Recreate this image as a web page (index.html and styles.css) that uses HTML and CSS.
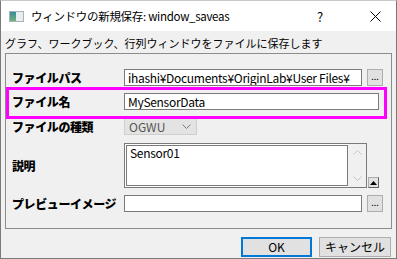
FILE: index.html
```
<!DOCTYPE html>
<html>
    <head>
        <meta charset="utf-8" />
        <title>ウィンドウの新規保存</title>
        <link rel="stylesheet" href="styles.css">
    </head>

    <body>
        <div class="m-dlg">
            <div class="titlebar">
                <span class="ico"><i></i></span>
                <span class="ttl">ウィンドウの新規保存: window_saveas</span>
                <span class="help">?</span>
                <span class="close">
                    <svg width="11" height="11" viewBox="0 0 11 11"><path d="M0.5 0.5L10.5 10.5M10.5 0.5L0.5 10.5" stroke="#000" stroke-width="1" fill="none"/></svg>
                </span>
            </div>

            <div class="body">
                <p class="desc">グラフ、ワークブック、行列ウィンドウをファイルに保存します</p>

                <div class="grp">
                    <div class="row r-path">
                        <label>ファイルパス</label>
                        <div class="edit w-path">ihashi¥Documents¥OriginLab¥User Files¥</div>
                        <span class="dots">...</span>
                    </div>
                    <div class="row r-name">
                        <label>ファイル名</label>
                        <div class="edit w-name">MySensorData</div>
                    </div>
                    <div class="row r-type">
                        <label>ファイルの種類</label>
                        <div class="combo">OGWU
                            <svg width="9" height="6" viewBox="0 0 9 6"><path d="M0.5 0.5L4.5 4.5L8.5 0.5" stroke="#7a7a7a" fill="none"/></svg>
                        </div>
                    </div>
                    <div class="row r-memo">
                        <label>説明</label>
                        <div class="memo">
                            <div class="txt">Sensor01</div>
                            <div class="sb">
                                <svg width="9" height="6" viewBox="0 0 9 6"><path d="M0.5 5.5L4.5 1.5L8.5 5.5" stroke="#c4c4c4" fill="none"/></svg>
                                <svg width="9" height="6" viewBox="0 0 9 6"><path d="M0.5 0.5L4.5 4.5L8.5 0.5" stroke="#c4c4c4" fill="none"/></svg>
                            </div>
                        </div>
                        <span class="up">
                            <svg width="7" height="4" viewBox="0 0 7 4"><path d="M0 4L3.5 0L7 4Z" fill="#000"/></svg>
                        </span>
                    </div>
                    <div class="row r-prev">
                        <label>プレビューイメージ</label>
                        <div class="edit w-path"></div>
                        <span class="dots">...</span>
                    </div>

                    <div class="mark"></div>
                </div>

                <div class="foot">
                    <span class="btn ok">OK</span>
                    <span class="btn">キャンセル</span>
                </div>
            </div>
        </div>
    </body>
</html>
```
FILE: styles.css
```
*{margin:0;padding:0;box-sizing:border-box;}
body{background:#fff;font-family:"Noto Sans CJK JP","Liberation Sans",sans-serif;font-size:12px;color:#000;}

.m-dlg{width:397px;height:259px;border:1px solid #7a7a7a;border-top-color:#c8c8c8;display:flex;flex-direction:column;}

.titlebar{height:30px;background:#fff;display:flex;align-items:center;flex-shrink:0;}
.titlebar .ico{width:15px;height:11px;margin-left:8px;border:1px solid #a8b4bc;background:#e8eef0;display:flex;}
.titlebar .ico i{width:6px;height:100%;background:linear-gradient(#3a8a9a,#6fb07a);}
.titlebar .ttl{margin-left:7px;font-size:11.5px;letter-spacing:-0.3px;}
.titlebar .help{margin-left:auto;font-size:13px;width:14px;}
.titlebar .close{width:14px;margin-left:39px;margin-right:12px;display:flex;}

.body{flex:1;background:#f0f0f0;display:flex;flex-direction:column;}
.desc{font-size:11px;line-height:14px;margin:5px 0 0 4px;height:16px;}

.grp{position:relative;margin:1px 0 0 4px;width:387px;height:176px;border:1px solid #8c8c8c;padding:15px 0 0 6px;}
.row{display:flex;align-items:center;height:17px;}
.row label{width:112px;font-weight:900;font-size:12px;letter-spacing:-0.4px;}
.r-name{margin-top:7px;}
.r-type{margin-top:8px;}
.r-memo{margin-top:8px;height:45px;}
.r-prev{margin-top:7px;}

.edit{height:17px;background:#fff;border:1px solid #7a7a7a;padding:0 3px;line-height:15px;white-space:nowrap;overflow:hidden;font-size:12px;letter-spacing:-0.3px;}
.w-path{width:238px;}
.w-name{width:255px;}
.dots{width:16px;height:17px;margin-left:5px;border:1px solid #adadad;background:#e1e1e1;font-size:9px;line-height:14px;text-align:center;}

.combo{width:73px;height:17px;background:#e3e3e3;border:1px solid #cfcfcf;color:#555;padding:0 4px;line-height:15px;display:flex;align-items:center;justify-content:space-between;}
.combo svg{margin-right:1px;}

.memo{width:243px;height:45px;display:flex;border:1px solid #7a7a7a;background:#fff;}
.memo .txt{flex:1;border:1px solid #7a7a7a;margin:1px 0 1px 1px;padding:0 3px;line-height:13px;letter-spacing:-0.3px;}
.memo .sb{width:18px;background:#f0f0f0;display:flex;flex-direction:column;justify-content:space-between;align-items:center;padding:5px 0;}
.up{align-self:flex-end;width:11px;height:11px;margin-left:1px;border:1px solid #adadad;border-right-color:#606060;border-bottom-color:#606060;background:#e1e1e1;display:flex;align-items:center;justify-content:center;}

.mark{position:absolute;left:0;top:33px;width:381px;height:32px;border:3px solid #ff00ff;}

.foot{display:flex;justify-content:flex-end;gap:7px;padding:8px 5px 0 0;}
.btn{width:72px;height:20px;border:1px solid #adadad;background:#e1e1e1;text-align:center;line-height:18px;font-size:12px;}
.btn.ok{width:71px;border:2px solid #0078d7;line-height:16px;}
```
